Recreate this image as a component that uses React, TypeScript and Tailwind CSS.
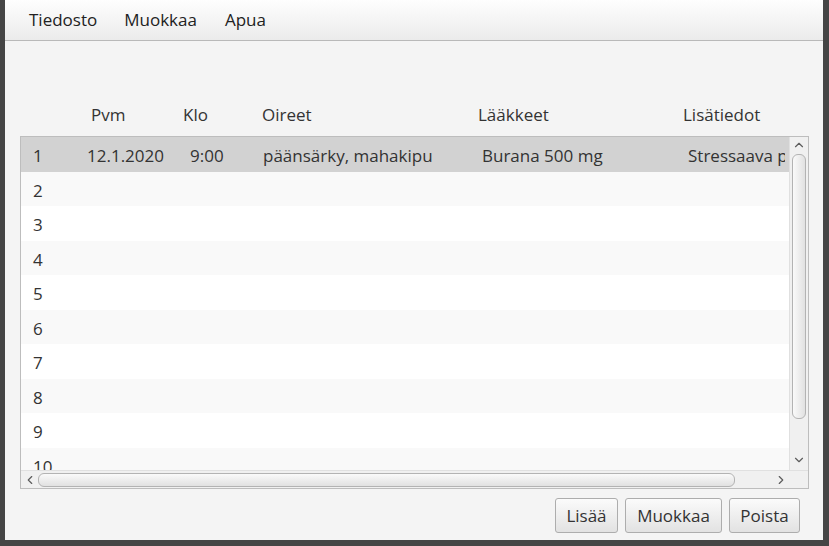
import { ChevronUp, ChevronDown, ChevronLeft, ChevronRight } from "lucide-react";

const font = { fontFamily: '"Open Sans", "Noto Sans", sans-serif' };

const rows = Array.from({ length: 10 }, (_, i) => i + 1);

const headers = [
  { label: "", w: "w-[71px]" },
  { label: "Pvm", w: "w-[92px]" },
  { label: "Klo", w: "w-[79px]" },
  { label: "Oireet", w: "w-[216px]" },
  { label: "Lääkkeet", w: "w-[205px]" },
  { label: "Lisätiedot", w: "flex-1" },
];

const Row = ({ n }: { n: number }) => {
  const selected = n === 1;
  const bg = selected ? "bg-[#d2d2d2]" : n % 2 === 0 ? "bg-[#f9f9f9]" : "bg-white";
  return (
    <div className={`flex h-[34.5px] shrink-0 items-center whitespace-nowrap pt-[3px] ${bg}`}>
      <div className="w-[66px] pl-[12px]">{n}</div>
      {selected && (
        <>
          <div className="w-[103px]">12.1.2020</div>
          <div className="w-[73px]">9:00</div>
          <div className="w-[219px]">päänsärky, mahakipu</div>
          <div className="w-[206px]">Burana 500 mg</div>
          <div className="w-[97px] overflow-hidden">Stressaava päivä</div>
        </>
      )}
    </div>
  );
};

const Button = ({ children, w }: { children: string; w: string }) => (
  <div
    className={`flex h-[35px] ${w} items-center justify-center rounded-[3px] border border-[#adadad] bg-gradient-to-b from-[#fbfbfb] to-[#e2e2e2] text-[#333]`}
  >
    {children}
  </div>
);

export default function App() {
  return (
    <div className="flex h-[546px] w-[829px] bg-[#454545]" style={font}>
      <div className="ml-[5px] flex h-[540px] w-[818px] flex-col bg-[#f4f4f4] text-[17px] text-[#333]">
        {/* menu bar */}
        <div className="flex h-[41px] shrink-0 items-center border-b border-[#b9b9b9] bg-gradient-to-b from-[#fefefe] to-[#ebebeb] pl-[24px] text-[#222]">
          <span className="mr-[27px]">Tiedosto</span>
          <span className="mr-[28px]">Muokkaa</span>
          <span>Apua</span>
        </div>

        {/* column headers */}
        <div className="mt-[59px] flex h-[29px] items-center pl-[15px]">
          {headers.map((h) => (
            <div key={h.label} className={h.w}>
              {h.label}
            </div>
          ))}
        </div>

        {/* table */}
        <div className="ml-[15px] mt-[7px] flex h-[353px] w-[789px] flex-col border border-[#bdbdbd] bg-white">
          <div className="flex h-[333px]">
            <div className="flex w-[768px] flex-col overflow-hidden">
              {rows.map((n) => (
                <Row key={n} n={n} />
              ))}
            </div>
            {/* vertical scrollbar */}
            <div className="flex w-[19px] flex-col items-center border-l border-[#e0e0e0] bg-[#f0f0f0]">
              <ChevronUp size={14} strokeWidth={2} className="mt-[1px] shrink-0 text-[#5c5c5c]" />
              <div className="mt-[2px] h-[265px] w-[14px] rounded-[6px] border border-[#b3b3b3] bg-gradient-to-r from-[#fafafa] to-[#e1e1e1]" />
              <div className="flex-1" />
              <ChevronDown size={14} strokeWidth={2} className="mb-[3px] shrink-0 text-[#5c5c5c]" />
            </div>
          </div>
          {/* horizontal scrollbar */}
          <div className="flex h-[18px] items-center border-t border-[#e0e0e0] bg-[#f0f0f0]">
            <ChevronLeft size={14} strokeWidth={2} className="ml-[2px] shrink-0 text-[#5c5c5c]" />
            <div className="ml-[1px] h-[14px] w-[697px] rounded-[6px] border border-[#b3b3b3] bg-gradient-to-b from-[#fafafa] to-[#e1e1e1]" />
            <div className="flex-1" />
            <ChevronRight size={14} strokeWidth={2} className="mr-[20px] shrink-0 text-[#5c5c5c]" />
          </div>
        </div>

        {/* buttons */}
        <div className="mr-[23px] mt-[9px] flex justify-end gap-[7px]">
          <Button w="w-[63px]">Lisää</Button>
          <Button w="w-[97px]">Muokkaa</Button>
          <Button w="w-[71px]">Poista</Button>
        </div>
      </div>
    </div>
  );
}
